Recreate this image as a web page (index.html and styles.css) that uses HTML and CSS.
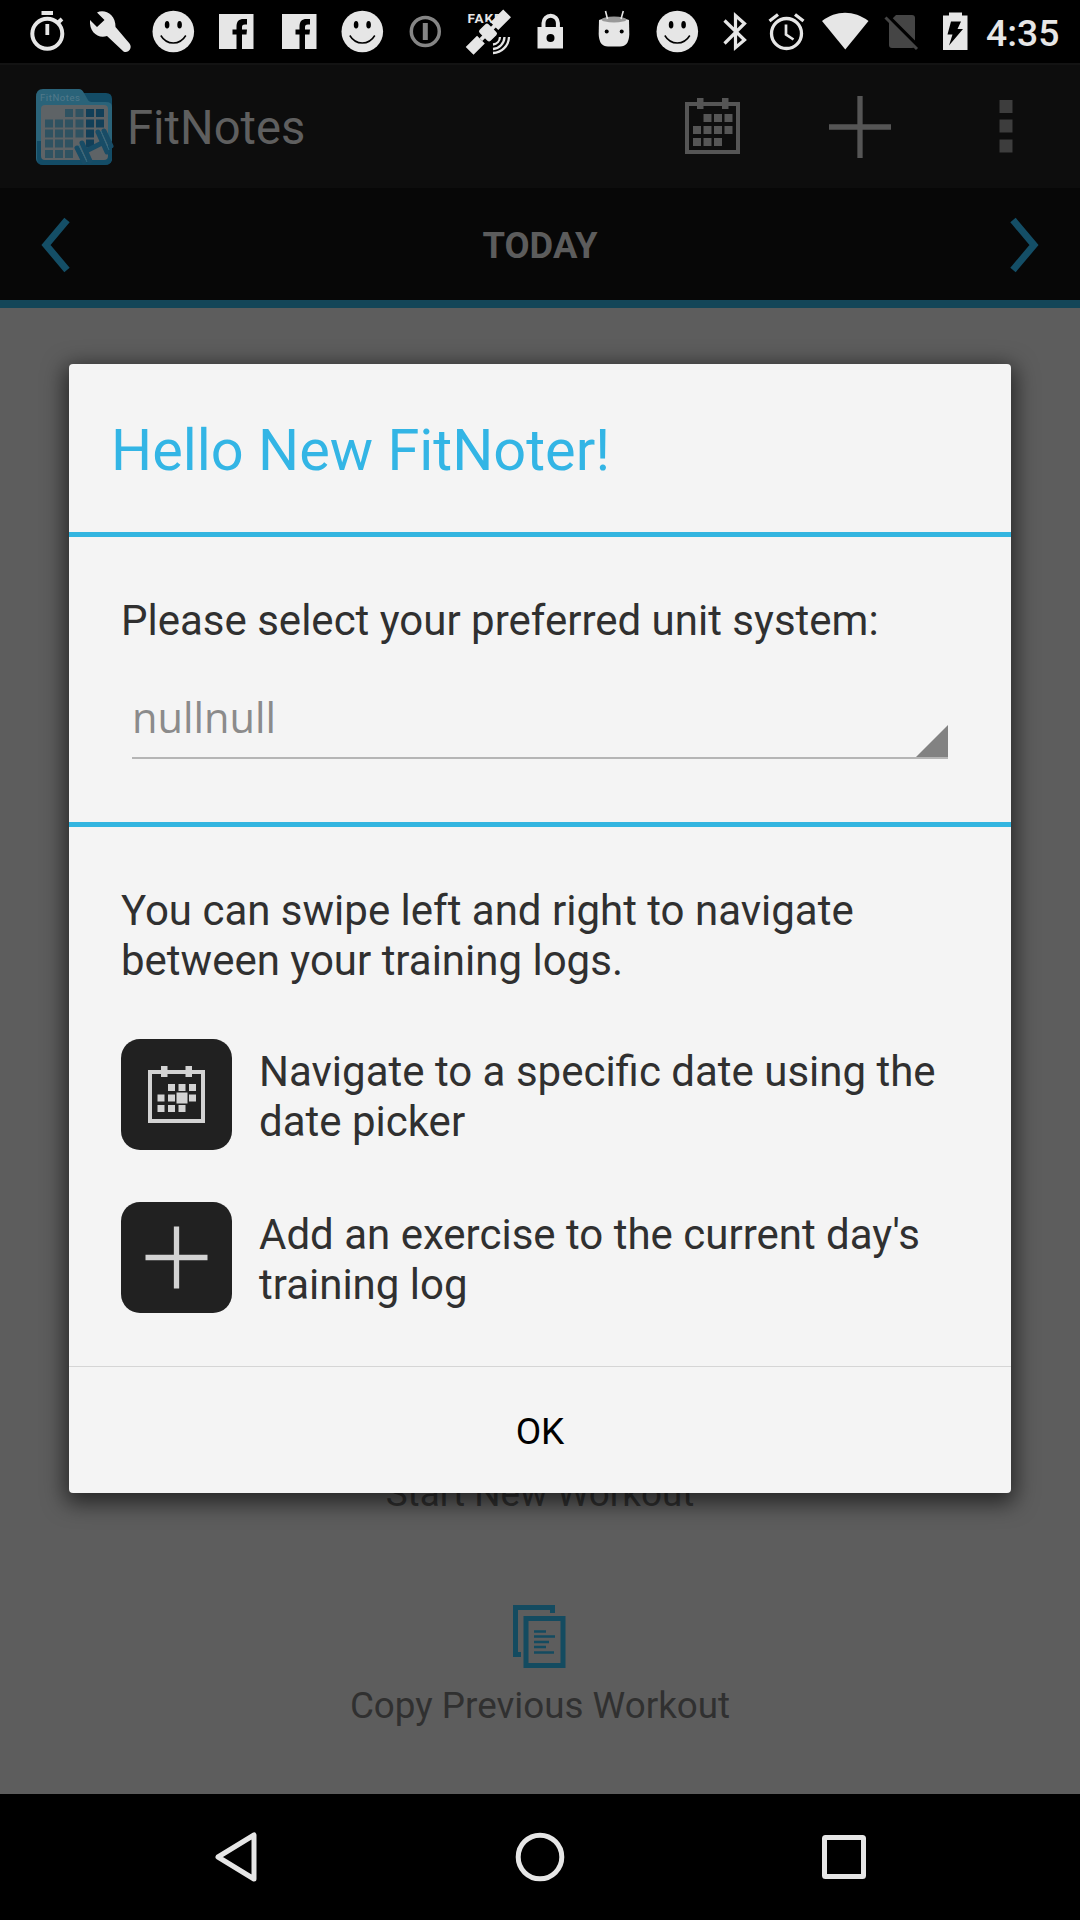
FILE: index.html
```html
<!DOCTYPE html>
<html lang="en">
<head>
<meta charset="utf-8">
<title>FitNotes</title>
<link rel="stylesheet" href="styles.css">
</head>
<body>
<svg class="defs" width="0" height="0" aria-hidden="true">
  <symbol id="smile" viewBox="0 0 63 63">
    <circle cx="32.300" cy="31.500" r="20.800" fill="#e6e6e6"/>
    <ellipse cx="26.100" cy="24.700" rx="2.300" ry="3.800"/>
    <ellipse cx="38.600" cy="24.700" rx="2.300" ry="3.800"/>
    <path d="M19.800 35.500C25.800 45.500 38.800 45.500 44.800 35.500" fill="none" stroke="#000" stroke-width="1.500"/>
  </symbol>
  <symbol id="facebook" viewBox="0 0 63 63">
    <path d="M15 14H49.500V49H15Z" fill="#e6e6e6"/>
    <path d="M32.500 49V34.500H28.500V29.500H32.500V27C32.500 21 35 19 39.500 19H43V24.500H41C38.500 24.500 38 25.500 38 27.500V29.500H43L42.500 34.500H38V49Z"/>
  </symbol>
</svg>
<div class="screen">
  <header class="status">
    <svg class="slot" viewBox="15 0 63 63"><g fill="none" stroke="#e6e6e6"><circle cx="47.300" cy="33.700" r="15" stroke-width="4"/><path d="M41.500 13H53" stroke-width="4"/><path d="M47.300 24V35" stroke-width="3.800"/><path d="M57 23.500L62 19" stroke-width="4"/></g></svg>
    <svg class="slot" viewBox="78 0 63 63"><path d="M97 12.500C104 8.500 116 14 115.500 27L129.500 43.500C133 48 128 54 123.500 51.500L107 36C98 39 89 32 90 20L97 27L104.500 20Z" fill="#e6e6e6"/></svg>
    <svg class="slot"><use href="#smile"/></svg>
    <svg class="slot"><use href="#facebook"/></svg>
    <svg class="slot"><use href="#facebook"/></svg>
    <svg class="slot"><use href="#smile"/></svg>
    <svg class="slot" viewBox="393 0 63 63"><g fill="none" stroke="#858585"><circle cx="425.300" cy="31.500" r="14" stroke-width="3.500"/><path d="M425.300 23V40" stroke-width="5"/></g></svg>
    <svg class="slot" viewBox="456 0 63 63"><text x="467.500" y="23" font-size="13.500" font-weight="700" fill="#e6e6e6" textLength="34">FAKE</text><g transform="rotate(-45 488 32.500)" fill="#e6e6e6"><path d="M462 27H478V38H462ZM497 27H515V38H497Z"/><rect x="481" y="24" width="14" height="17" rx="3" stroke="#000" stroke-width="1.500"/><path d="M478 30.500H498V34.500H478Z"/></g><path d="M493 44.500A8 8 0 0 0 500 37M493 49A12.500 12.500 0 0 0 504.500 37M493 53A16.500 16.500 0 0 0 509 37" fill="none" stroke="#e6e6e6" stroke-width="2.300"/></svg>
    <svg class="slot" viewBox="519 0 63 63"><path d="M543.500 29V23A7.200 7.200 0 0 1 557.900 23V29" fill="none" stroke="#e6e6e6" stroke-width="4"/><path d="M537.500 27H563V48.500H537.500Z" fill="#e6e6e6"/><circle cx="550.500" cy="38" r="4"/></svg>
    <svg class="slot" viewBox="582 0 63 63"><path d="M599 20Q614 14 629 20L629.300 34Q629 46.500 620 46.500H608Q599 46.500 598.700 34Z" fill="#e6e6e6"/><ellipse cx="614" cy="19.500" rx="12.500" ry="3" fill="#999"/><path d="M605.500 11L607.500 19M623.300 11L621 19" stroke="#e6e6e6" stroke-width="1.600"/><circle cx="606.700" cy="31.500" r="2"/><circle cx="621.700" cy="31.500" r="2"/></svg>
    <svg class="slot"><use href="#smile"/></svg>
    <svg class="bt" viewBox="708 0 54 63"><path d="M724.500 20.500L744.500 40L735.500 47.500V15.500L744.500 23.500L724.500 43.500" fill="none" stroke="#e6e6e6" stroke-width="3.200"/></svg>
    <svg class="alarm" viewBox="762 0 49 63"><g fill="none" stroke="#e6e6e6" stroke-width="3.300"><circle cx="786.500" cy="33.500" r="15"/><path d="M769.500 21L778 14.500M795 14.500L803.500 21"/><path d="M786 24.500V34.500L793.500 39.500" stroke-width="2.700"/></g></svg>
    <svg class="wifi" viewBox="811 0 64 63"><path d="M822 21C836 10 854 10 868.500 21L845.300 49.500Z" fill="#e6e6e6"/></svg>
    <svg class="sim" viewBox="875 0 52 63"><path d="M889 22L896 15H912Q915 15 915 18V45Q915 48 912 48H892Q889 48 889 45Z" fill="#454545"/><path d="M889 18L918 47" stroke="#000" stroke-width="5"/><path d="M885.500 17.500L917 49" stroke="#454545" stroke-width="3"/></svg>
    <svg class="battery" viewBox="927 0 52 63"><path d="M943 15.500H949V12.500H962V15.500H967.500V50H943Z" fill="#e6e6e6"/><path d="M951 21.500H961L957.500 29H963L949 45.500L952.500 34.500H947.500Z"/></svg>
    <span class="clock">4:35</span>
  </header>

  <div class="appbar">
    <svg class="logo" width="80" height="80" viewBox="35 86 80 80">
      <path d="M37 97Q37 92 43 92H106Q112 92 112 98V157Q112 164 105 164H43Q36 164 36 157Z" fill="#134c66"/>
      <path d="M36 96Q36 88 43 88H79Q82 88 84 92L88 99Q89 101 93 101H106Q112 101 112 106V157Q112 162 106 162H42Q36 162 36 157Z" fill="#2a6379"/>
      <path d="M37 140V157Q37 164 43 164H105Q112 164 112 157V140Z" fill="#134c66"/>
      <text x="40" y="100" font-size="9.500" textLength="40" fill="#52798a">FitNotes</text>
      <rect x="41" y="104" width="67" height="55" rx="4" fill="#5e6366"/>
      <path d="M65 108h8v8h-8zM75.500 108h8v8h-8zM45 118.500h8v8h-8zM55 118.500h8v8h-8zM65 118.500h8v8h-8zM75.500 118.500h8v8h-8zM45 128.500h8v8h-8zM55 128.500h8v8h-8zM65 128.500h8v8h-8zM75.500 128.500h8v8h-8zM45 138.500h8v8h-8zM55 138.500h8v8h-8zM65 138.500h8v8h-8zM45 149h8v8h-8zM55 149h8v8h-8zM65 149h8v8h-8z" fill="#2f5261"/>
      <path d="M86 108h8v8h-8zM96 108h8v8h-8zM86 118.500h8v8h-8zM96 118.500h8v8h-8zM86 128.500h8v8h-8zM86 138.500h8v8h-8z" fill="#123f58"/>
      <path d="M84 151L104 141" stroke="#184c66" stroke-width="5"/>
      <path d="M77 147L84 161M82 142L90 160M98 131L107 151M104 130L111 145" stroke="#184c66" stroke-width="5" stroke-linecap="round"/>
      <path d="M79 144L87 161M101 130L109 149" stroke="#326b83" stroke-width="1"/>
    </svg>
    <h1 class="app-name">FitNotes</h1>
    <div class="actions">
      <svg width="56" height="56" viewBox="0 0 56 56" fill="#555"><path d="M0 4H55V56H0ZM4 8V52H51V8Z" fill-rule="evenodd"/><path d="M12 0h6.500v11h-6.500zM37 0h6.500v11h-6.500zM18.500 16h8v8h-8zM29 16h8v8h-8zM39.500 16h8v8h-8zM8 28h8v8h-8zM18.500 28h8v8h-8zM29 28h8v8h-8zM39.500 28h8v8h-8zM8 40h8v8h-8zM18.500 40h8v8h-8zM29 40h8v8h-8z"/></svg>
      <svg width="62" height="62" viewBox="0 0 62 62"><path d="M31 0V62M0 31H62" stroke="#555" stroke-width="5.300"/></svg>
      <svg width="14" height="53" viewBox="0 0 14 53"><path d="M.5 0H13.500V13H.5ZM.5 19.500H13.500V32.500H.5ZM.5 39.500H13.500V52.500H.5Z" fill="#3d3d3d"/></svg>
    </div>
  </div>

  <nav class="datebar">
    <svg width="30" height="56" viewBox="0 0 30 56"><path d="M26 3L5 28L26 53" fill="none" stroke="#144e66" stroke-width="7"/></svg>
    <span class="today">TODAY</span>
    <svg width="30" height="56" viewBox="0 0 30 56"><path d="M4 3L25 28L4 53" fill="none" stroke="#144e66" stroke-width="7"/></svg>
  </nav>

  <main class="log">
    <p class="start">Start New Workout</p>
    <svg class="copy-icon" width="54" height="64" viewBox="0 0 54 64"><path d="M0 0H42V8H37V5H5V47H8V52H0Z" fill="#144b60"/><path d="M13 13.500H50V60.500H13Z" fill="none" stroke="#144b60" stroke-width="5"/><path d="M21 26.500H33M21 31.500H42M21 37H36M21 42H33M21 47.500H41" stroke="#144b60" stroke-width="2.400"/></svg>
    <p class="copy">Copy Previous Workout</p>
  </main>

  <footer class="navbar">
    <svg width="44" height="52" viewBox="0 0 44 52"><path d="M40 4V48L4 26Z" fill="none" stroke="#e6e6e6" stroke-width="5" stroke-linejoin="round"/></svg>
    <svg width="50" height="50" viewBox="0 0 50 50"><circle cx="25" cy="25" r="21.800" fill="none" stroke="#e6e6e6" stroke-width="5"/></svg>
    <svg width="44" height="44" viewBox="0 0 44 44"><rect x="2.500" y="2.500" width="39" height="39" rx="1" fill="none" stroke="#e6e6e6" stroke-width="5"/></svg>
  </footer>

  <section class="dialog" role="dialog">
    <h2 class="title">Hello New FitNoter!</h2>
    <div class="units">
      <p class="prompt">Please select your preferred unit system:</p>
      <div class="spinner"><span>nullnull</span><svg width="32" height="32" viewBox="0 0 32 32"><path d="M32 0V32H0Z" fill="#828282"/></svg></div>
    </div>
    <div class="tips">
      <p class="swipe">You can swipe left and right to navigate<br>between your training logs.</p>
      <div class="tip">
        <svg width="111" height="111" viewBox="0 0 111 111"><rect width="111" height="111" rx="19" fill="#212121"/><g fill="#d3d3d3"><path d="M27 31H84V84H27ZM31 35V80H80V35Z" fill-rule="evenodd"/><path d="M40 27h6.500v11h-6.500zM64.500 27h6.500v11h-6.500zM47 45h7v7h-7zM57.500 45h7v7h-7zM68 45h7v7h-7zM36.500 55.500h7v7h-7zM47 55.500h7v7h-7zM55.500 53.500h11v11h-11zM68 55.500h7v7h-7zM36.500 66h7v7h-7zM47 66h7v7h-7zM57.500 66h7v7h-7z"/></g></svg>
        <p>Navigate to a specific date using the<br>date picker</p>
      </div>
      <div class="tip">
        <svg width="111" height="111" viewBox="0 0 111 111"><rect width="111" height="111" rx="19" fill="#212121"/><path d="M55.500 24.500V86.500M24.500 55.500H86.500" stroke="#d3d3d3" stroke-width="5.300"/></svg>
        <p>Add an exercise to the current day's<br>training log</p>
      </div>
    </div>
    <button class="ok">OK</button>
  </section>
</div>
</body>
</html>
```
FILE: styles.css
```css
* { box-sizing: border-box; }
body { margin: 0; background: #000; font-family: Roboto, sans-serif; }
h1, h2, p { margin: 0; font-weight: 400; }
svg { display: block; flex: none; }
.defs { position: absolute; }
.screen { position: relative; width: 1080px; height: 1920px; display: flex; flex-direction: column; overflow: hidden; }

.status { height: 63px; display: flex; align-items: center; padding-left: 15px; background: #000; }
.status svg { height: 63px; }
.slot { width: 63px; }
.bt { width: 54px; }
.alarm { width: 49px; }
.wifi { width: 64px; }
.sim, .battery { width: 52px; }
.clock { margin-left: 7px; padding-top: 3px; font-size: 37.300px; font-weight: 500; line-height: 44px; color: #e6e6e6; white-space: nowrap; }

.appbar { height: 125px; display: flex; align-items: center; padding: 0 67px 0 35px; background: #0d0d0d; border-top: 2px solid #131313; }
.logo { margin-top: 1px; }
.app-name { margin-left: 12px; padding-top: 3px; font-size: 47.200px; line-height: 56px; color: #5f5f5f; }
.actions { margin-left: auto; display: flex; align-items: center; gap: 88px; }
.actions svg:first-child { margin-bottom: 1px; }
.actions svg:last-child { margin-left: 20px; }

.datebar { height: 120px; display: flex; align-items: center; justify-content: space-between; padding: 1px 41px 0; background: #070707; border-bottom: 8px solid #144658; }
.today { padding-top: 3px; font-size: 36.400px; font-weight: 700; line-height: 42px; color: #5c5c5c; }

.log { height: 1486px; display: flex; flex-direction: column; align-items: center; padding-top: 1164px; background: #5d5d5d; color: #303030; font-size: 36.800px; line-height: 43px; }
.copy-icon { margin: 90px 0 15px; }

.navbar { flex: 1; display: flex; align-items: center; justify-content: space-between; padding: 0 214px; background: #000; }

.dialog { position: absolute; left: 69px; top: 364px; width: 942px; height: 1129px; display: flex; flex-direction: column; background: #f4f4f4; border-radius: 4px; box-shadow: 0 6px 22px 4px rgba(0, 0, 0, .6); color: #303030; font-size: 42px; line-height: 49.500px; }
.title { height: 173px; padding: 53px 0 0 42px; border-bottom: 5px solid #33b5e0; font-size: 57.700px; line-height: 67px; color: #33b5e5; }
.units { height: 290px; padding: 59px 63px 0 52px; border-bottom: 5px solid #33b5e0; }
.spinner { height: 69px; margin: 44px 0 0 11px; display: flex; justify-content: space-between; align-items: flex-end; border-bottom: 2px solid #b5b5b5; font-family: "Open Sans", sans-serif; font-size: 41.600px; color: #8b8b8b; }
.spinner span { padding-bottom: 14px; }
.tips { height: 539px; padding: 59px 52px 0; }
.swipe { margin-bottom: 54px; }
.tip { display: flex; align-items: center; gap: 27px; margin-bottom: 52px; }
.tip p { padding-top: 4px; white-space: nowrap; }
.ok { height: 127px; padding-top: 3px; border: 0; border-top: 1px solid #d5d5d5; background: none; font: 400 37px/43px Roboto, sans-serif; color: #000; }
```
